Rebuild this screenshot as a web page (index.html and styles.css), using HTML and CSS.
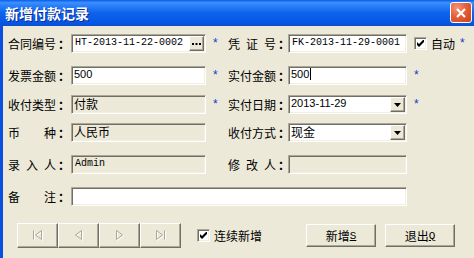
FILE: index.html
```html
<!DOCTYPE html>
<html lang="zh-CN">
<head>
  <meta charset="UTF-8" />
  <title>新增付款记录</title>
  <link rel="stylesheet" href="styles.css">
</head>
<body>
  <div class="window">
    <div class="titlebar">
      <span class="title">新增付款记录</span>
      <span class="close">
        <svg width="10" height="10" viewBox="0 0 10 10"><path d="M1 1L9 9M9 1L1 9" stroke="#fff" stroke-width="2.2"/></svg>
      </span>
    </div>

    <div class="content">
      <div class="form">
        <!-- row 1 -->
        <span class="label">合同编号<span class="colon">：</span></span>
        <div class="field mono">HT-2013-11-22-0002
          <span class="mini-btn dots"><svg width="9" height="2" viewBox="0 0 9 2"><path d="M0 0h2v2H0zM3.5 0h2v2h-2zM7 0h2v2H7z"/></svg></span>
        </div>
        <span class="star">*</span>
        <span class="label">凭&ensp;证&ensp;号<span class="colon">：</span></span>
        <div class="field mono">FK-2013-11-29-0001</div>
        <div class="extra">
          <span class="check"><svg width="7" height="7" viewBox="0 0 7 7"><path d="M0 2L2 4L7 -1V2L2 7L0 5Z"/></svg></span>
          <span class="check-text">自动</span>
          <span class="star after">*</span>
        </div>

        <!-- row 2 -->
        <span class="label">发票金额<span class="colon">：</span></span>
        <div class="field num">500</div>
        <span class="star">*</span>
        <span class="label">实付金额<span class="colon">：</span></span>
        <div class="field num">500<span class="caret"></span></div>
        <div class="extra"><span class="star">*</span></div>

        <!-- row 3 -->
        <span class="label">收付类型<span class="colon">：</span></span>
        <div class="field disabled">付款</div>
        <span class="star">*</span>
        <span class="label">实付日期<span class="colon">：</span></span>
        <div class="field num combo">2013-11-29
          <span class="mini-btn"><svg width="7" height="4" viewBox="0 0 7 4"><path d="M0 0h7L3.5 4z"/></svg></span>
        </div>
        <div class="extra"><span class="star">*</span></div>

        <!-- row 4 -->
        <span class="label">币　　种<span class="colon">：</span></span>
        <div class="field disabled">人民币</div>
        <span></span>
        <span class="label">收付方式<span class="colon">：</span></span>
        <div class="field combo">现金
          <span class="mini-btn"><svg width="7" height="4" viewBox="0 0 7 4"><path d="M0 0h7L3.5 4z"/></svg></span>
        </div>
        <span></span>

        <!-- row 5 -->
        <span class="label">录&ensp;入&ensp;人<span class="colon">：</span></span>
        <div class="field disabled mono">Admin</div>
        <span></span>
        <span class="label">修&ensp;改&ensp;人<span class="colon">：</span></span>
        <div class="field disabled"></div>
        <span></span>

        <!-- row 6 -->
        <span class="label">备　　注<span class="colon">：</span></span>
        <div class="field wide"></div>
      </div>

      <div class="footer">
        <div class="nav">
          <span class="btn nav-btn">
            <svg width="12" height="11" viewBox="0 0 12 11">
              <g fill="none" stroke="#fff" transform="translate(1 1)"><path d="M1.5 0.5v9M9.5 0.5L3.5 5L9.5 9.5Z"/></g>
              <g fill="none" stroke="#aca899"><path d="M1.5 0.5v9M9.5 0.5L3.5 5L9.5 9.5Z"/></g>
            </svg>
          </span>
          <span class="btn nav-btn">
            <svg width="12" height="11" viewBox="0 0 12 11">
              <g fill="none" stroke="#fff" transform="translate(1 1)"><path d="M8.5 0.5L2.5 5L8.5 9.5Z"/></g>
              <g fill="none" stroke="#aca899"><path d="M8.5 0.5L2.5 5L8.5 9.5Z"/></g>
            </svg>
          </span>
          <span class="btn nav-btn">
            <svg width="12" height="11" viewBox="0 0 12 11">
              <g fill="none" stroke="#fff" transform="translate(1 1)"><path d="M2.5 0.5L8.5 5L2.5 9.5Z"/></g>
              <g fill="none" stroke="#aca899"><path d="M2.5 0.5L8.5 5L2.5 9.5Z"/></g>
            </svg>
          </span>
          <span class="btn nav-btn">
            <svg width="12" height="11" viewBox="0 0 12 11">
              <g fill="none" stroke="#fff" transform="translate(1 1)"><path d="M1.5 0.5L7.5 5L1.5 9.5ZM9.5 0.5v9"/></g>
              <g fill="none" stroke="#aca899"><path d="M1.5 0.5L7.5 5L1.5 9.5ZM9.5 0.5v9"/></g>
            </svg>
          </span>
        </div>

        <span class="check loop"><svg width="7" height="7" viewBox="0 0 7 7"><path d="M0 2L2 4L7 -1V2L2 7L0 5Z"/></svg></span>
        <span class="check-text">连续新增</span>

        <div class="actions">
          <span class="btn action">新增<u>S</u></span>
          <span class="btn action">退出<u>Q</u></span>
        </div>
      </div>
    </div>
  </div>
</body>
</html>
```

FILE: styles.css
```css
* {
  box-sizing: border-box;
}
body {
  margin: 0;
  width: 474px;
  height: 258px;
  overflow: hidden;
  background-color: #ece9d8;
  font-family: "Noto Sans CJK SC", sans-serif;
  font-size: 12px;
  color: #000;
}
.window {
  display: flex;
  flex-direction: column;
  height: 258px;
}

/* title bar */
.titlebar {
  flex: none;
  height: 26px;
  display: flex;
  align-items: center;
  padding: 0 2px 0 5px;
  background: linear-gradient(to bottom, #0a5ce8 0%, #3d8fff 10%, #2a80fa 22%, #0f62eb 50%, #0558e5 85%, #0a4fd2 100%);
  color: #fff;
}
.title {
  flex: 1;
  font-size: 14px;
  font-weight: bold;
  text-shadow: 1px 1px 0 #0a2a9a;
}
.close {
  width: 22px;
  height: 21px;
  margin-top: -1px;
  display: flex;
  align-items: center;
  justify-content: center;
  border: 1px solid #fff;
  border-radius: 3px;
  background: radial-gradient(circle at 30% 25%, #f39478 0%, #e4603a 45%, #cc4018 100%);
}

/* dialog content */
.content {
  flex: 1;
  border-left: 3px solid #0b4fe0;
  padding: 8px 19px 0 5px;
}
.form {
  display: grid;
  grid-template-columns: 63px 135px 22px 60px 119px 1fr;
  grid-template-rows: 32px 29px 28px 32px 32px 19px;
  align-items: start;
}
.label {
  height: 19px;
  line-height: 19px;
  white-space: nowrap;
}
.colon {
  display: inline-block;
  width: 12px;
  text-indent: 2px;
  font-weight: bold;
}
.field {
  position: relative;
  height: 19px;
  line-height: 15px;
  padding-left: 2px;
  background-color: #fff;
  border: 1px solid;
  border-color: #aca899 #fff #fff #aca899;
  box-shadow: inset 1px 1px 0 #716f64, inset -1px -1px 0 #f1efe2;
  white-space: nowrap;
  overflow: hidden;
}
.field.disabled {
  background-color: #ece9d8;
}
.field.wide {
  grid-column: 2 / 6;
}
.mono {
  font-family: "Liberation Mono", monospace;
  font-size: 10px;
  padding-left: 3px;
}
.num {
  font-family: "Liberation Sans", sans-serif;
  font-size: 11px;
}
.caret {
  display: inline-block;
  width: 1px;
  height: 12px;
  margin-left: 1px;
  vertical-align: -2px;
  background-color: #000;
}
.mini-btn {
  position: absolute;
  top: 1px;
  right: 1px;
  width: 15px;
  height: 15px;
  display: flex;
  align-items: center;
  justify-content: center;
  background-color: #ece9d8;
  border: 1px solid;
  border-color: #fff #716f64 #716f64 #fff;
  box-shadow: inset -1px -1px 0 #aca899;
}
.star {
  height: 19px;
  line-height: 19px;
  padding-left: 7px;
  font-family: "Liberation Sans", sans-serif;
  font-size: 12px;
  color: #1838c8;
}
.extra {
  display: flex;
  align-items: center;
  height: 19px;
  padding-left: 7px;
}
.extra .star {
  padding-left: 0;
}
.extra .star.after {
  padding-left: 5px;
}

/* checkboxes */
.check {
  flex: none;
  width: 13px;
  height: 13px;
  display: flex;
  align-items: center;
  justify-content: center;
  background-color: #fff;
  border: 1px solid;
  border-color: #aca899 #fff #fff #aca899;
  box-shadow: inset 1px 1px 0 #716f64, inset -1px -1px 0 #f1efe2;
}
.check-text {
  margin-left: 4px;
  white-space: nowrap;
}

/* footer */
.footer {
  display: flex;
  align-items: center;
  height: 25px;
  margin-top: 17px;
  padding-left: 9px;
}
.nav {
  display: flex;
}
.btn {
  display: flex;
  align-items: center;
  justify-content: center;
  background-color: #ece9d8;
  border: 1px solid;
  border-color: #fff #716f64 #716f64 #fff;
  box-shadow: inset -1px -1px 0 #aca899;
}
.nav-btn {
  width: 41px;
  height: 25px;
}
.check.loop {
  margin-left: 16px;
}
.actions {
  display: flex;
  gap: 9px;
  margin-left: auto;
}
.action {
  width: 70px;
  height: 23px;
}
.action u {
  font-family: "Liberation Mono", monospace;
  font-size: 11px;
  text-underline-offset: 1px;
}
```
